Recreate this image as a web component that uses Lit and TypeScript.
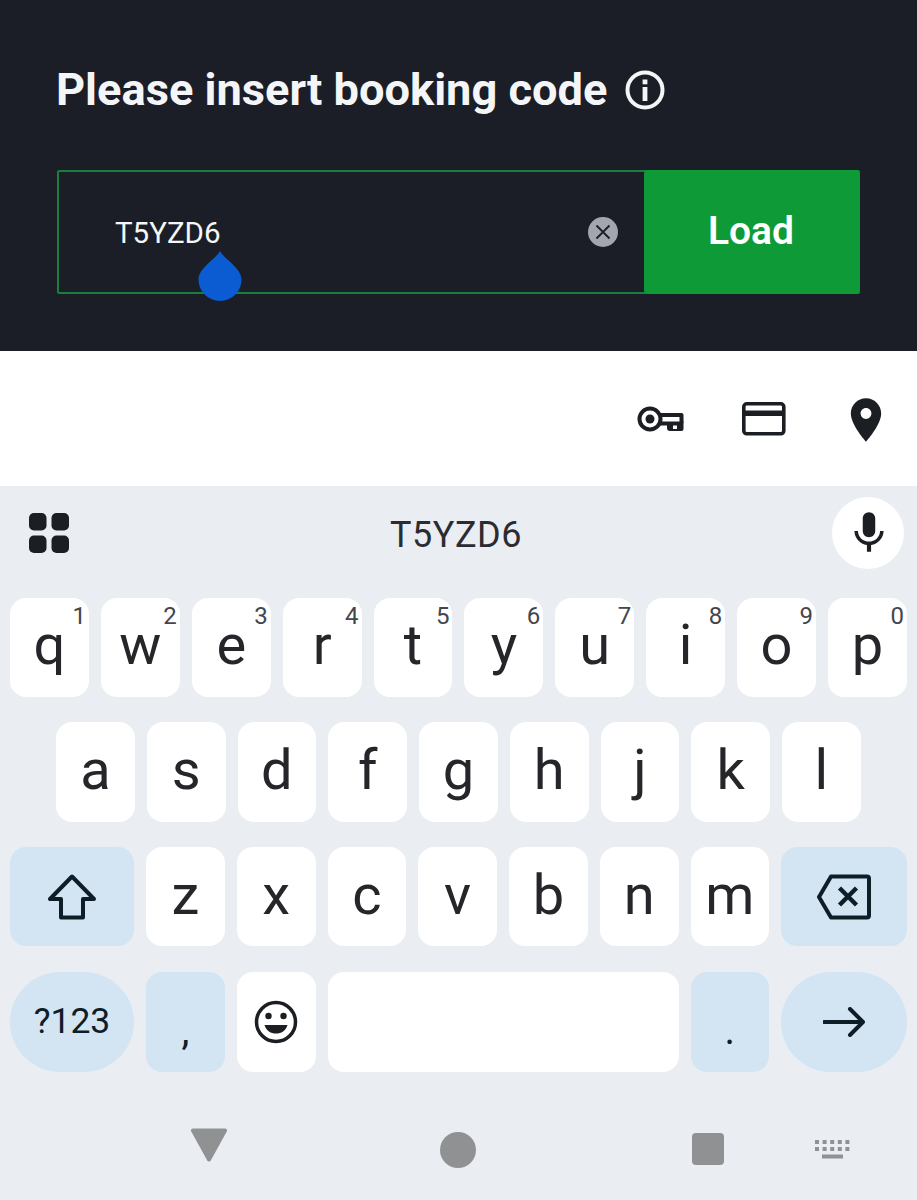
import { LitElement, html, css, svg } from "lit";
import { customElement } from "lit/decorators.js";

const rows = [
  [["q","1"],["w","2"],["e","3"],["r","4"],["t","5"],["y","6"],["u","7"],["i","8"],["o","9"],["p","0"]],
  [["a"],["s"],["d"],["f"],["g"],["h"],["j"],["k"],["l"]],
  [["z"],["x"],["c"],["v"],["b"],["n"],["m"]],
];

@customElement("app-root")
export class AppRoot extends LitElement {
  static styles = css`
    :host { display: block; width: 917px; height: 1200px; overflow: hidden; font-family: Roboto, "Liberation Sans", sans-serif; background: #eaeef3; }
    svg { display: block; flex: none; }
    .head { height: 351px; box-sizing: border-box; background: #1b1e26; padding: 60px 57px 0; }
    .title { display: flex; align-items: center; gap: 18px; height: 60px; color: #f4f5f6; font-size: 45.200px; font-weight: 700; line-height: 60px; margin-left: -1px; }
    .field { position: relative; display: flex; margin-top: 50px; height: 124px; box-sizing: border-box; width: 803px; border: 2px solid #17803a; border-radius: 2px; }
    .code { flex: 1; display: flex; align-items: center; padding: 0 28px 0 56px; color: #f5f6f7; font-size: 29.500px; justify-content: space-between; }
    .code span { position: relative; top: 1px; }
    .load { width: 216px; margin: -2px; flex: none; display: flex; align-items: center; justify-content: center; background: #0e9a36; border-radius: 4px; color: #fff; font-size: 39px; font-weight: 600; padding: 0 2px 3px 0; box-sizing: border-box; }
    .drop { position: absolute; left: 139px; top: 79px; }
    .tools { height: 135px; background: #fff; display: flex; justify-content: flex-end; align-items: flex-start; padding: 43px 25px 0 0; box-sizing: border-box; }
    .tools .k { margin: 12px 57px 0 0; }
    .tools .c { margin: 8px 54px 0 0; }
    .kb { background: #eaeef3; height: 714px; }
    .strip { height: 111.600px; display: flex; align-items: flex-start; justify-content: space-between; padding: 11px 13px 0 29px; box-sizing: border-box; }
    .grid { margin-top: 16px; }
    .sug { font-size: 36px; color: #2a2c31; margin-top: 15px; margin-left: 11px; line-height: 46px; letter-spacing: .5px; }
    .mic { width: 72px; height: 72px; padding-left: 2px; box-sizing: border-box; border-radius: 50%; background: #fff; display: flex; align-items: center; justify-content: center; }
    .rows { display: flex; flex-direction: column; gap: 25.200px; padding: 0 10px; }
    .row { display: flex; gap: 12px; height: 99.500px; }
    .row:last-child { height: 100.200px; }
    .row.home { padding: 0 46px; }
    .key { position: relative; width: 78.750px; flex: none; box-sizing: border-box; background: #fff; border-radius: 16px; display: flex; align-items: center; justify-content: center; color: #26262a; font-size: 56px; font-weight: 400; padding-bottom: 4px; line-height: 1; }
    .row.top .key { width: 78.900px; }
    .key sup { position: absolute; right: 3px; top: 4px; font-size: 24px; line-height: 28px; color: #43464c; font-weight: 400; }
    .mod { background: #d3e4f3; color: #0f1d27; }
    .wide { width: 124px; }
    .end { flex: 1; }
    .pill { border-radius: 50px; }
    .sym { font-size: 35.500px; font-weight: 400; padding: 0; }
    .space { width: 351px; }
    .plain { padding: 0; }
    .punct { align-items: flex-end; padding: 0 0 21px; font-size: 40px; font-weight: 400; }
    .nav { height: 128px; display: flex; align-items: flex-start; padding-left: 190px; box-sizing: border-box; }
    .nav .tri { margin: 56px 212px 0 0; }
    .nav .dot { margin: 60px 216px 0 0; width: 36px; height: 36px; border-radius: 50%; background: #8f9193; flex: none; }
    .nav .sq { margin: 61px 91px 0 0; width: 32px; height: 32px; border-radius: 4px; background: #8f9193; flex: none; }
    .nav .mini { margin-top: 68px; }
  `;

  private keyRow(keys: string[][]) {
    return keys.map(([l, n]) => html`<div class="key">${l}${n ? html`<sup>${n}</sup>` : ""}</div>`);
  }

  render() {
    const ink = "#0f1d27";
    return html`
      <div class="head">
        <div class="title">Please insert booking code
          <svg width="40" height="40" viewBox="0 0 40 40">
            <circle cx="20" cy="20" r="17.500" fill="none" stroke="#f4f5f6" stroke-width="4"/>
            <rect x="17.600" y="17" width="4.800" height="14" fill="#f4f5f6"/>
            <rect x="17.600" y="9.500" width="4.800" height="4.800" fill="#f4f5f6"/>
          </svg>
        </div>
        <div class="field">
          <div class="code"><span>T5YZD6</span>
            <svg width="30" height="30" viewBox="0 0 30 30">
              <circle cx="15" cy="15" r="15" fill="#a4a6af"/>
              <path d="M8.500 8.500l13 13M21.500 8.500l-13 13" stroke="#1b1e26" stroke-width="1.800" fill="none"/>
            </svg>
          </div>
          <div class="load">Load</div>
          <svg class="drop" width="44" height="50" viewBox="0 0 44 50">
            <path d="M22 0C26 8 43.500 17 43.500 28.500A21.500 21.500 0 0 1 .5 28.500C.5 17 18 8 22 0Z" fill="#0b5bd3"/>
          </svg>
        </div>
      </div>

      <div class="tools">
        <svg class="k" width="48" height="26" viewBox="0 0 48 26">
          <circle cx="13" cy="13" r="10.500" fill="none" stroke="#1b1e22" stroke-width="4"/>
          <circle cx="13" cy="13" r="4.500" fill="#1b1e22"/>
          <path d="M22 9H44.500V17" fill="none" stroke="#1b1e22" stroke-width="4" stroke-linejoin="round"/>
          <path d="M22 15.500H46.500V23a2 2 0 0 1-2 2H33a3 3 0 0 1-3-3V19.500H22Z" fill="#1b1e22"/>
          <rect x="36" y="19.500" width="4" height="3.500" fill="#fff"/>
        </svg>
        <svg class="c" width="44" height="34" viewBox="0 0 44 34">
          <rect x="1.800" y="1.800" width="40" height="30" rx="3" fill="#fff" stroke="#1b1e22" stroke-width="3.600"/>
          <rect x="2" y="8.500" width="40" height="5.500" fill="#1b1e22"/>
        </svg>
        <svg width="52" height="52" viewBox="0 0 24 24">
          <path fill="#1b1e22" d="M12 2C8.130 2 5 5.130 5 9c0 5.250 7 13 7 13s7-7.750 7-13c0-3.870-3.130-7-7-7zm0 9.500c-1.380 0-2.500-1.120-2.500-2.500s1.120-2.500 2.500-2.500 2.500 1.120 2.500 2.500-1.120 2.500-2.500 2.500z"/>
        </svg>
      </div>

      <div class="kb">
        <div class="strip">
          <svg class="grid" width="40" height="40" viewBox="0 0 40 40" fill="#1b1e22">
            <rect x="0" y="0" width="17.500" height="17.500" rx="5"/><rect x="22.500" y="0" width="17.500" height="17.500" rx="5"/>
            <rect x="0" y="22.500" width="17.500" height="17.500" rx="5"/><rect x="22.500" y="22.500" width="17.500" height="17.500" rx="5"/>
          </svg>
          <div class="sug">T5YZD6</div>
          <div class="mic">
            <svg width="50" height="50" viewBox="0 0 24 24"><path fill="#1b1e22" d="M12 14c1.660 0 2.990-1.340 2.990-3L15 5c0-1.660-1.340-3-3-3S9 3.340 9 5v6c0 1.660 1.340 3 3 3zm5.300-3c0 3-2.540 5.100-5.300 5.100S6.700 14 6.700 11H5c0 3.410 2.720 6.230 6 6.720V21h2v-3.280c3.280-.48 6-3.300 6-6.720h-1.700z"/></svg>
          </div>
        </div>
        <div class="rows">
          <div class="row top">${this.keyRow(rows[0])}</div>
          <div class="row home">${this.keyRow(rows[1])}</div>
          <div class="row">
            <div class="key mod wide plain">
              <svg width="48" height="46" viewBox="0 0 48 46">
                <path d="M24 2.500L2 25H13V43.500H35V25H46Z" fill="none" stroke="${ink}" stroke-width="4" stroke-linejoin="round"/>
              </svg>
            </div>
            ${this.keyRow(rows[2])}
            <div class="key mod end plain">
              <svg width="54" height="46" viewBox="0 0 54 46">
                <path d="M14 2.500H50A2 2 0 0 1 52 4.500V41.500A2 2 0 0 1 50 43.500H14L2 23Z" fill="none" stroke="${ink}" stroke-width="4" stroke-linejoin="round"/>
                <path d="M22.500 14L39.500 31M39.500 14L22.500 31" fill="none" stroke="${ink}" stroke-width="4.500"/>
              </svg>
            </div>
          </div>
          <div class="row">
            <div class="key mod wide pill sym">?123</div>
            <div class="key mod punct">,</div>
            <div class="key plain">
              <svg width="44" height="44" viewBox="0 0 44 44">
                <circle cx="22" cy="22" r="19.500" fill="none" stroke="#1b1e22" stroke-width="3.500"/>
                <circle cx="14.500" cy="16" r="3.200" fill="#1b1e22"/><circle cx="29.500" cy="16" r="3.200" fill="#1b1e22"/>
                <path d="M10.500 25H33.500C32 31 27 33.500 22 33.500S12 31 10.500 25Z" fill="#1b1e22"/>
              </svg>
            </div>
            <div class="key space"></div>
            <div class="key mod punct">.</div>
            <div class="key mod end pill plain">
              <svg width="42" height="30" viewBox="0 0 42 30">
                <path d="M1 15H39M27 2L40 15L27 28" fill="none" stroke="${ink}" stroke-width="4" stroke-linecap="round" stroke-linejoin="round"/>
              </svg>
            </div>
          </div>
        </div>
        <div class="nav">
          <svg class="tri" width="38" height="34" viewBox="0 0 38 34"><path d="M3 2.500H35L19 31.500Z" fill="#8f9193" stroke="#8f9193" stroke-width="4" stroke-linejoin="round"/></svg>
          <div class="dot"></div>
          <div class="sq"></div>
          <svg class="mini" width="35" height="19" viewBox="0 0 35 19" fill="#8f9193">
            ${[0,1,2,3,4].map(i => svg`<rect x="${i*7.6}" y="0" width="4" height="4"/><rect x="${i*7.6}" y="7" width="4" height="4"/>`)}
            <rect x="7" y="14.500" width="21" height="4"/>
          </svg>
        </div>
      </div>
    `;
  }
}
